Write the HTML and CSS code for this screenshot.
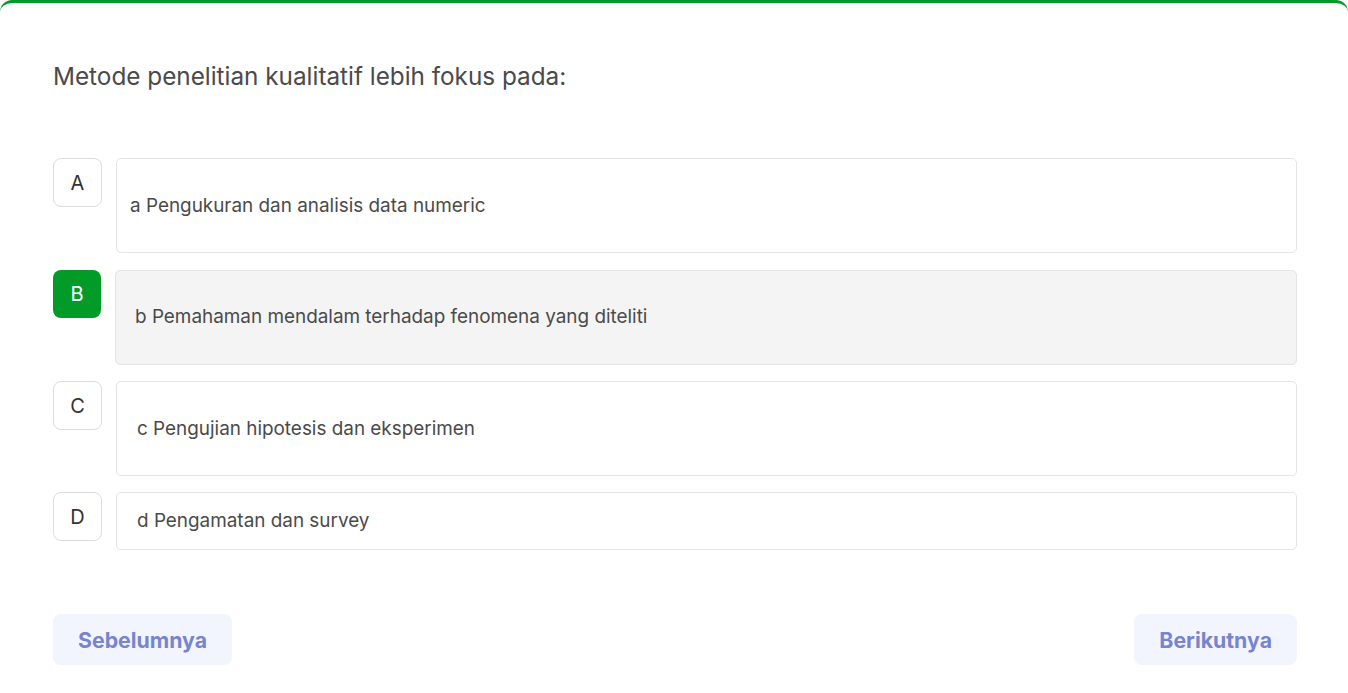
FILE: index.html
```html
<!DOCTYPE html>
<html lang="id">
<head>
<meta charset="utf-8">
<title>Soal</title>
<link rel="stylesheet" href="styles.css">
</head>
<body>
<div class="card">
  <h1 class="question">Metode penelitian kualitatif lebih fokus pada:</h1>
  <div class="options">
    <div class="option">
      <div class="letter">A</div>
      <div class="answer tall pad-a">a Pengukuran dan analisis data numeric</div>
    </div>
    <div class="option option-b">
      <div class="letter selected">B</div>
      <div class="answer tall active pad-b">b Pemahaman mendalam terhadap fenomena yang diteliti</div>
    </div>
    <div class="option">
      <div class="letter">C</div>
      <div class="answer tall pad-c">c Pengujian hipotesis dan eksperimen</div>
    </div>
    <div class="option">
      <div class="letter">D</div>
      <div class="answer short pad-c">d Pengamatan dan survey</div>
    </div>
  </div>
  <div class="nav">
    <button class="btn prev">Sebelumnya</button>
    <button class="btn next">Berikutnya</button>
  </div>
</div>
</body>
</html>
```
FILE: styles.css
```css
html, body {
  margin: 0;
  padding: 0;
  background: #ffffff;
  font-family: Inter, "Noto Sans", sans-serif;
}

.card {
  border-top: 3px solid #039b27;
  border-radius: 12px 12px 0 0;
  padding: 57px 51px 28px 53px;
  background: #fff;
}

.question {
  margin: 0;
  font-size: 24.3px;
  font-weight: 400;
  line-height: 32px;
  color: #4a4a4a;
}

.options {
  margin-top: 66px;
  display: flex;
  flex-direction: column;
  gap: 16px;
}

.option {
  display: flex;
  align-items: flex-start;
  gap: 14px;
}

.option-b { margin-top: 1px; }

.letter {
  flex: 0 0 auto;
  box-sizing: border-box;
  width: 49px;
  height: 49px;
  border: 1px solid #dcdcdc;
  border-radius: 8px;
  display: flex;
  align-items: center;
  justify-content: center;
  font-size: 20px;
  color: #333;
}

.letter.selected {
  width: 48px;
  height: 48px;
  border: none;
  background: #039b27;
  color: #fff;
}

.answer {
  flex: 1;
  box-sizing: border-box;
  border: 1px solid #e4e4e4;
  border-radius: 5px;
  display: flex;
  align-items: center;
  font-size: 18.9px;
  color: #4a4a4a;
}

.answer.tall { height: 95px; }
.answer.short { height: 58px; }
.answer.active { background: #f4f4f4; }

.pad-a { padding-left: 13px; padding-bottom: 1px; }
.pad-b { padding-left: 19px; padding-bottom: 2px; }
.pad-c { padding-left: 20px; padding-bottom: 1px; }

.nav {
  margin-top: 64px;
  display: flex;
  justify-content: space-between;
}

.btn {
  height: 51px;
  border: none;
  border-radius: 8px;
  background: #f2f5fe;
  color: #7884cf;
  font-family: Inter, "Noto Sans", sans-serif;
  font-size: 21.3px;
  font-weight: 700;
  padding: 0 25px;
}
```
